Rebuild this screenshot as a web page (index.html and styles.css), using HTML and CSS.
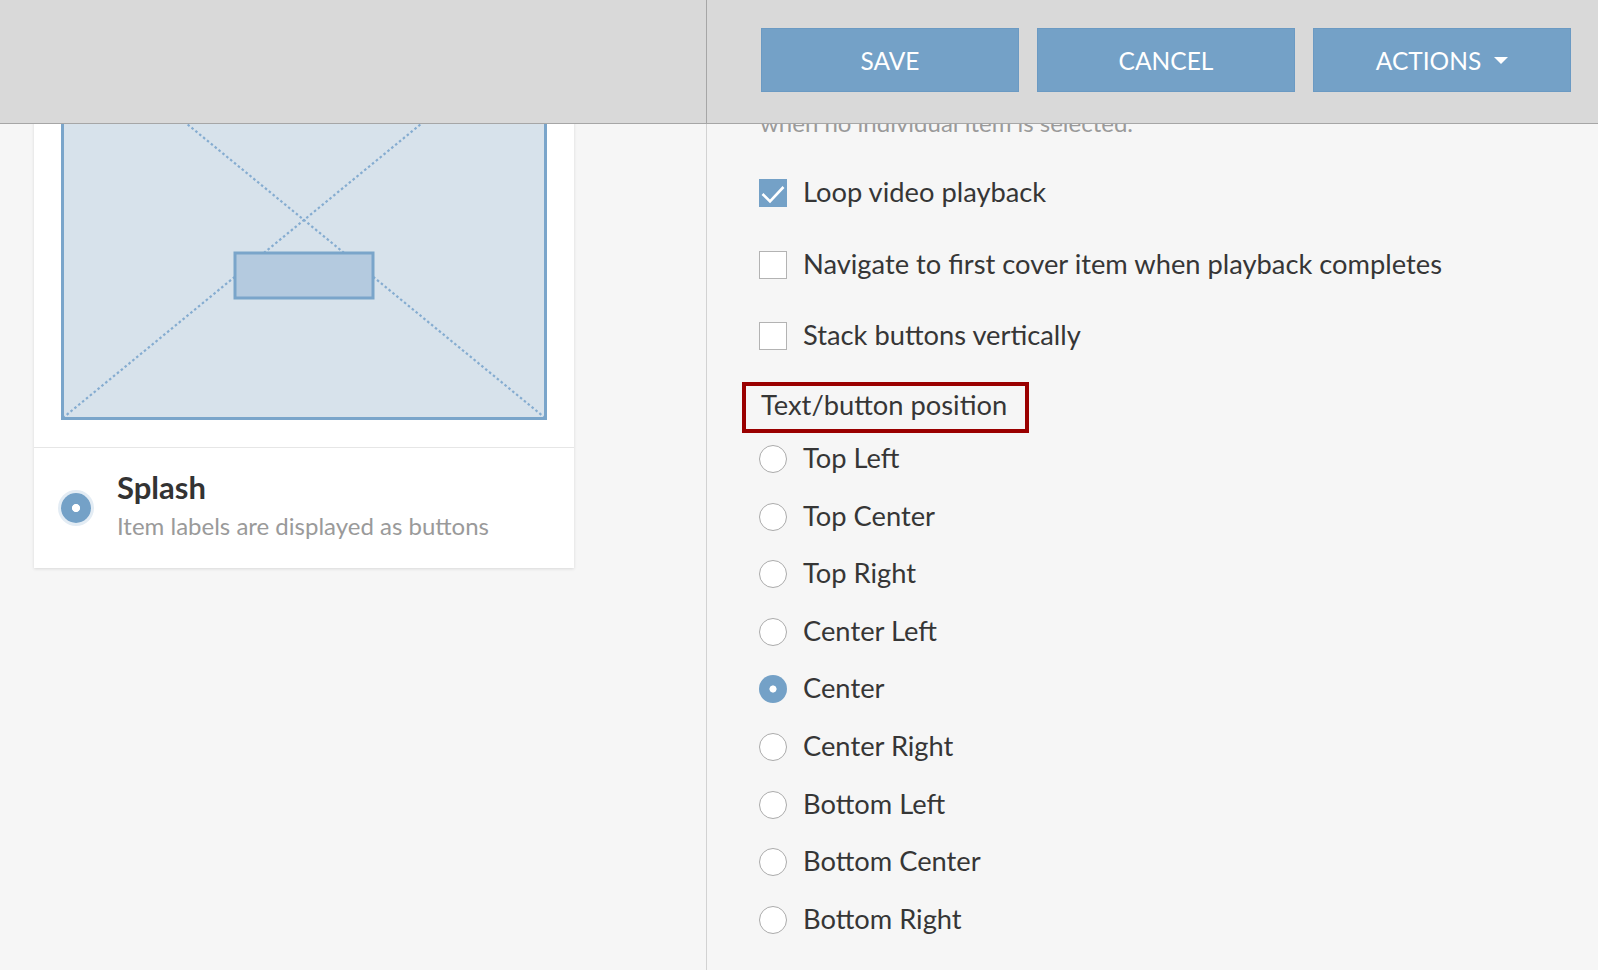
FILE: index.html
```html
<!DOCTYPE html>
<html lang="en">
<head>
<meta charset="utf-8">
<title>Cover settings</title>
<link rel="stylesheet" href="styles.css">
</head>
<body>
<header class="topbar">
  <div class="topbar-left"></div>
  <div class="topbar-right">
    <button class="btn" type="button">SAVE</button>
    <button class="btn" type="button">CANCEL</button>
    <button class="btn" type="button">ACTIONS<span class="caret"></span></button>
  </div>
</header>
<main class="layout">
  <section class="col-left">
    <div class="card">
      <div class="card-media">
        <div class="preview">
          <svg class="preview-svg" width="480" height="394" viewBox="0 0 480 394">
            <line x1="0" y1="0" x2="480" y2="394" stroke="#85acd0" stroke-width="2.2" stroke-dasharray="2.5 2.5"/>
            <line x1="480" y1="0" x2="0" y2="394" stroke="#85acd0" stroke-width="2.2" stroke-dasharray="2.5 2.5"/>
            <rect x="171" y="230" width="138" height="45" fill="#b4cadf" stroke="#7aa5ca" stroke-width="3"/>
          </svg>
        </div>
      </div>
      <div class="card-option">
        <span class="radio radio-on radio-lg"></span>
        <div class="opt-text">
          <div class="opt-title">Splash</div>
          <div class="opt-desc">Item labels are displayed as buttons</div>
        </div>
      </div>
    </div>
  </section>
  <section class="col-right">
    <p class="desc">when no individual item is selected.</p>
    <div class="checks">
      <label class="row"><span class="box box-on"><svg width="28" height="28" viewBox="0 0 28 28"><polyline points="3.5,15 11,22.5 24.5,8" fill="none" stroke="#fff" stroke-width="2.6"/></svg></span><span class="lbl">Loop video playback</span></label>
      <label class="row"><span class="box"></span><span class="lbl">Navigate to first cover item when playback completes</span></label>
      <label class="row"><span class="box"></span><span class="lbl">Stack buttons vertically</span></label>
    </div>
    <div class="group-title">Text/button position</div>
    <div class="radios">
      <label class="row"><span class="radio"></span><span class="lbl">Top Left</span></label>
      <label class="row"><span class="radio"></span><span class="lbl">Top Center</span></label>
      <label class="row"><span class="radio"></span><span class="lbl">Top Right</span></label>
      <label class="row"><span class="radio"></span><span class="lbl">Center Left</span></label>
      <label class="row"><span class="radio radio-on"></span><span class="lbl">Center</span></label>
      <label class="row"><span class="radio"></span><span class="lbl">Center Right</span></label>
      <label class="row"><span class="radio"></span><span class="lbl">Bottom Left</span></label>
      <label class="row"><span class="radio"></span><span class="lbl">Bottom Center</span></label>
      <label class="row"><span class="radio"></span><span class="lbl">Bottom Right</span></label>
    </div>
  </section>
</main>
</body>
</html>
```

FILE: styles.css
```css
* { box-sizing: border-box; }
html, body { margin: 0; padding: 0; }
body {
  width: 1598px;
  height: 970px;
  overflow: hidden;
  background: #f6f6f6;
  color: #363636;
  font-family: Lato, "Open Sans", "Liberation Sans", sans-serif;
}

/* top bar overlays the scrolled content */
.topbar {
  position: fixed;
  top: 0;
  left: 0;
  right: 0;
  height: 124px;
  display: flex;
  background: #d9d9d9;
  border-bottom: 1px solid #a6a6a6;
  z-index: 10;
}
.topbar-left {
  width: 707px;
  border-right: 1px solid #a6a6a6;
}
.topbar-right {
  display: flex;
  gap: 18px;
  padding: 28px 0 0 54px;
}
.btn {
  width: 258px;
  height: 64px;
  padding: 0;
  display: flex;
  align-items: center;
  justify-content: center;
  background: #74a1c7;
  border: 1px solid #6b9ac3;
  color: #fff;
  font-family: Lato, "Open Sans", sans-serif;
  font-size: 24.5px;
}
.caret {
  width: 0;
  height: 0;
  margin-left: 13px;
  border-left: 7px solid transparent;
  border-right: 7px solid transparent;
  border-top: 7px solid #fff;
}

.layout {
  display: grid;
  grid-template-columns: 707px 1fr;
  min-height: 970px;
}

/* left column */
.col-left {
  border-right: 1px solid #d2d2d2;
  padding-left: 34px;
}
.card {
  width: 540px;
  background: #fff;
  box-shadow: 0 1px 3px rgba(0, 0, 0, 0.12);
}
.card-media {
  padding: 20px 27px 27px;
  border-bottom: 1px solid #e6e6e6;
}
.preview {
  width: 486px;
  height: 400px;
  border: 3px solid #7aa5ca;
  background: #d7e2eb;
}
.preview-svg { display: block; }
.card-option {
  height: 120px;
  display: flex;
  align-items: center;
  gap: 26px;
  padding: 0 27px;
}
.opt-text {
  align-self: flex-start;
  padding-top: 21px;
}
.opt-title {
  font-size: 31px;
  line-height: 36px;
  font-weight: 700;
  color: #333;
}
.opt-desc {
  margin-top: 6px;
  font-size: 24px;
  line-height: 30px;
  color: #9a9a9a;
}

/* right column */
.col-right {
  padding: 108px 0 0 52px;
}
.desc {
  margin: 0 0 0 1px;
  font-size: 24px;
  line-height: 30px;
  color: #9a9a9a;
}
.checks {
  margin-top: 41px;
  display: flex;
  flex-direction: column;
  gap: 43.5px;
}
.row {
  display: flex;
  align-items: center;
  height: 28px;
  gap: 16px;
  font-size: 27.3px;
}
.lbl {
  line-height: 28px;
  padding-bottom: 2px;
  white-space: nowrap;
}
.box {
  flex: none;
  width: 28px;
  height: 28px;
  border: 1px solid #b3b3b3;
  background: #fff;
}
.box svg { display: block; margin: -1px; }
.box-on {
  background: #74a1c7;
  border-color: #74a1c7;
}

.group-title {
  margin: 32px 0 0 -17px;
  width: 287px;
  height: 51px;
  padding: 0 0 6px 15px;
  border: 4px solid #9a0000;
  font-size: 27.3px;
  line-height: 37px;
  white-space: nowrap;
}

.radios {
  margin-top: 12px;
  display: flex;
  flex-direction: column;
  gap: 29.6px;
}
.radio {
  flex: none;
  width: 28px;
  height: 28px;
  border-radius: 50%;
  border: 1px solid #ababab;
  background: #fff;
}
.radio-on {
  border: none;
  background: radial-gradient(circle, #fff 3.2px, #74a1c7 3.9px);
}
.radio-lg {
  width: 30px;
  height: 30px;
  background: radial-gradient(circle, #fff 3.7px, #74a1c7 4.4px);
  box-shadow: 0 0 0 3px #e3ecf4;
}
```
